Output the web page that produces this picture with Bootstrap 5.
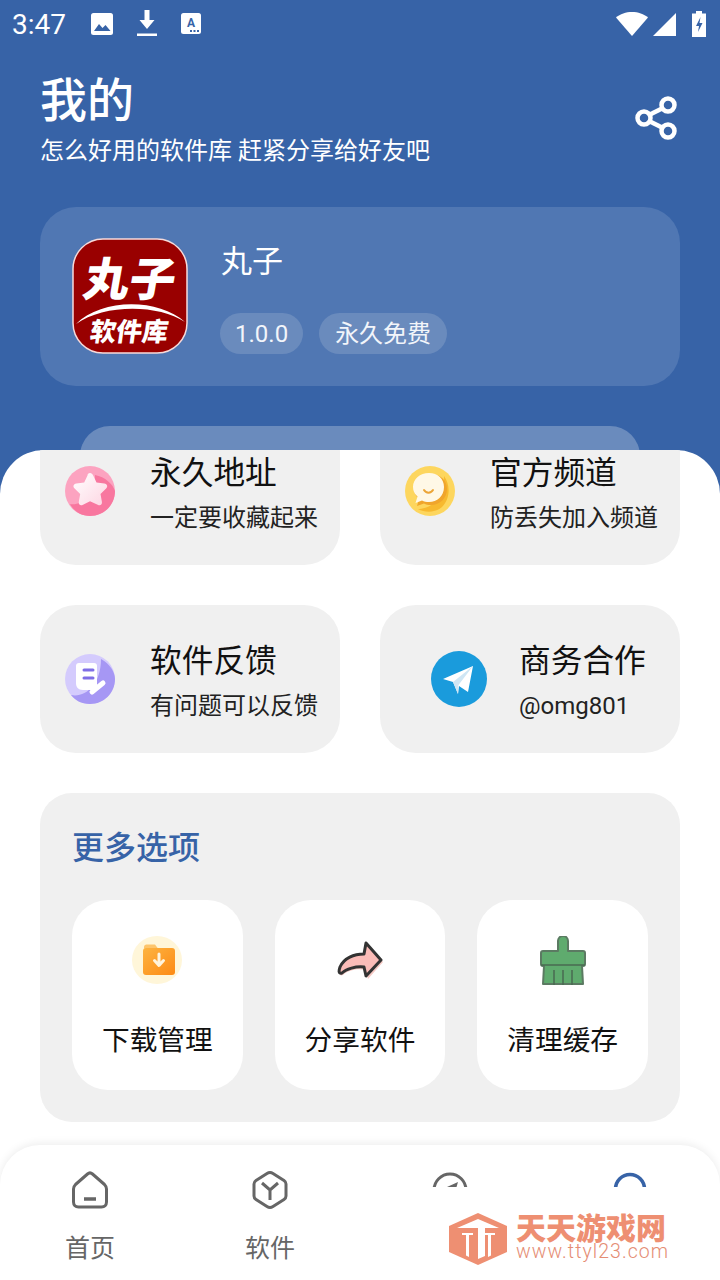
<!DOCTYPE html>
<html lang="zh">
<head>
    <meta charset="UTF-8">
    <meta name="viewport" content="width=device-width, initial-scale=1.0">
    <link href="https://cdn.jsdelivr.net/npm/bootstrap@5.3.3/dist/css/bootstrap.min.css" rel="stylesheet">
    <title>我的</title>
    <style>
        html, body{
            height: 1280px;
            overflow: hidden;
        }
        body{
            background: #3763a7;
            font-family: Roboto, "Noto Sans CJK SC", sans-serif;
            color: #111;
        }
        .app{
            position: relative;
            width: 720px;
            height: 1280px;
            overflow: hidden;
        }
        .top-area{
            height: 450px;
            overflow: hidden;
            color: #fff;
        }
        .status-bar{
            height: 48px;
            padding: 0 14px 0 12px;
        }
        .status-time{
            font-size: 28px;
            width: 54px;
            line-height: 48px;
            margin-top: 2px;
            white-space: nowrap;
        }
        .head-row{
            padding: 25px 43px 0 40px;
            height: 159px;
        }
        .head-title{
            font-size: 47px;
            line-height: 56px;
            font-weight: 500;
        }
        .head-sub{
            font-size: 24px;
            line-height: 36px;
            margin-top: 4px;
        }
        .head-share{
            margin-top: 23px;
        }
        .profile-box{
            margin: 0 40px;
            height: 179px;
            background: #5077b3;
            border-radius: 36px;
            padding: 31px 32px;
        }
        .profile-name{
            font-size: 31px;
            line-height: 44px;
            margin: 2px 0 0 1px;
        }
        .pill-row{
            margin-top: 29px;
        }
        .pill-tag{
            background: #6a8bbd;
            border-radius: 21px;
            height: 41px;
            line-height: 42px;
            font-size: 24px;
            padding: 0 16px;
            color: #f2f5fa;
        }
        .pill-tag.pill-short{
            padding: 0 15px;
        }
        .peek-box{
            margin: 40px 80px 0;
            height: 60px;
            background: #6a8bbd;
            border-radius: 30px 30px 0 0;
        }
        .sheet{
            height: 830px;
            background: #fff;
            border-radius: 44px 44px 0 0;
            overflow: hidden;
        }
        .sheet-inner{
            margin-top: -33px;
            padding: 0 40px;
        }
        .link-grid{
            display: grid;
            grid-template-columns: 300px 300px;
            gap: 40px;
        }
        .link-box{
            height: 148px;
            background: #f0f0f0;
            border-radius: 36px;
            padding-left: 25px;
        }
        .link-box.tg-box{
            padding-left: 51px;
        }
        .link-text{
            margin-left: 35px;
            padding-top: 4px;
        }
        .tg-box .link-text{
            margin-left: 32px;
        }
        .link-title{
            font-size: 31.7px;
            line-height: 44px;
        }
        .link-sub{
            font-size: 24px;
            line-height: 34px;
            margin-top: 5px;
            color: #222;
        }
        .more-panel{
            margin-top: 40px;
            height: 329px;
            background: #f0f0f0;
            border-radius: 32px;
            padding: 33px 32px 32px;
        }
        .more-title{
            font-size: 32px;
            line-height: 44px;
            font-weight: 500;
            color: #3763a7;
            margin-bottom: 30px;
        }
        .tile-grid{
            display: grid;
            grid-template-columns: repeat(3, 1fr);
            gap: 32px;
        }
        .tile-box{
            height: 190px;
            background: #fff;
            border-radius: 36px;
        }
        .tile-icon{
            height: 48px;
            margin-top: 36px;
        }
        .tile-label{
            font-size: 27.7px;
            line-height: 40px;
            margin-top: 37px;
        }
        .tab-bar{
            margin: 23px -40px 0;
            height: 135px;
            background: #fff;
            border-radius: 40px 40px 0 0;
            box-shadow: 0 -2px 8px rgba(0,0,0,.07);
        }
        .tab-item{
            width: 180px;
            padding-top: 26px;
            color: #666;
        }
        .tab-label{
            font-size: 25px;
            line-height: 36px;
            margin-top: 22px;
        }
        .water-mark{
            position: absolute;
            left: 427px;
            top: 1187px;
            width: 293px;
            height: 84px;
            background: #fff;
            padding: 26px 0 0 22px;
            color: #ee8f72;
        }
        .water-text{
            margin-left: 9px;
        }
        .water-name{
            font-size: 30px;
            line-height: 26px;
            font-weight: 900;
            margin-top: 3px;
        }
        .water-url{
            font-size: 19.5px;
            line-height: 20px;
            letter-spacing: 1.05px;
            font-weight: 300;
            color: #e58d74;
        }
    </style>
</head>
<body>
<div class="app">
    <div class="top-area">
        <div class="status-bar d-flex align-items-center">
            <div class="status-time">3:47</div>
            <svg class="ms-4 me-4" width="24" height="24" viewBox="0 0 24 24"><rect x="1" y="1" width="22" height="22" rx="2.5" fill="#fff"/><path d="M4 19l5-7 3.500 4 3-3 5 6z" fill="#3763a7"/></svg>
            <svg width="20" height="28" viewBox="0 0 20 28" style="margin-left:-1px"><path d="M7.500 0h5v10h5l-7.500 9-7.500-9h5z" fill="#fff"/><rect y="23.500" width="20" height="2.500" fill="#fff"/></svg>
            <svg width="20" height="22" viewBox="0 0 20 22" style="margin-left:24px"><rect width="20" height="21" rx="2.500" fill="#fff"/><text x="10" y="13.500" text-anchor="middle" font-size="12" font-weight="700" font-family="Roboto" fill="#3763a7">A</text><path d="M9 17h2v2H9zM12.500 17h2v2h-2zM16 17h2v2h-2z" fill="#3763a7"/></svg>
            <svg class="ms-auto" width="32" height="24" viewBox="0 0 32 24"><path d="M0 5.500C4 2 10 0 16 0s12 2 16 5.500L16 24z" fill="#fff"/></svg>
            <svg style="margin-left:5px" width="23" height="23" viewBox="0 0 23 23"><path d="M23 0v23H0z" fill="#fff"/></svg>
            <svg style="margin-left:16px" width="14" height="26" viewBox="0 0 14 26"><path d="M4 0h6v2.500h4V26H0V2.500h4z" fill="#fff"/><path d="M8.500 6L4 15h3l-1 6 4.500-9h-3z" fill="#3763a7"/></svg>
        </div>
        <div class="head-row d-flex justify-content-between">
            <div>
                <div class="head-title">我的</div>
                <div class="head-sub">怎么好用的软件库 赶紧分享给好友吧</div>
            </div>
            <svg class="head-share" width="42" height="44" viewBox="0 0 42 44" fill="none" stroke="#fff" stroke-width="4.500"><circle cx="9" cy="22" r="6.500"/><circle cx="33" cy="9" r="6.500"/><circle cx="33" cy="35" r="6.500"/><path d="M15 18.500L27 12.500M15 25.500L27 31.500"/></svg>
        </div>
        <div class="profile-box d-flex">
            <svg width="116" height="116" viewBox="0 0 116 116">
                <rect x="1" y="1" width="114" height="114" rx="30" fill="#990000" stroke="#f7dada" stroke-width="1.500"/>
                <text transform="translate(9 58) skewX(-10)" font-size="46" font-weight="900" font-family="'Noto Sans CJK SC'" fill="#fff">丸子</text>
                <path d="M4 86C30 60 86 60 113 84C86 66 32 66 4 86z" fill="#fff"/>
                <text transform="translate(17 103) skewX(-8)" font-size="26" font-weight="900" font-family="'Noto Sans CJK SC'" fill="#fff">软件库</text>
            </svg>
            <div class="ms-3 ps-3">
                <div class="profile-name">丸子</div>
                <div class="pill-row d-flex gap-3">
                    <div class="pill-tag pill-short">1.0.0</div>
                    <div class="pill-tag">永久免费</div>
                </div>
            </div>
        </div>
        <div class="peek-box"></div>
    </div>

    <div class="sheet">
        <div class="sheet-inner">
            <div class="link-grid">
                <div class="link-box d-flex align-items-center">
                    <svg width="50" height="50" viewBox="0 0 50 50"><defs><linearGradient id="starFill" x1="0" y1="0" x2="1" y2="1"><stop offset="0" stop-color="#fff"/><stop offset="1" stop-color="#fdd5e2"/></linearGradient></defs><circle cx="25" cy="25" r="25" fill="#fca3c0"/><path d="M30 9C40 11 48 18 50 25 50 39 39 50 25 50 15 50 8 44 5 38c12 2 26-10 25-29z" fill="#f8779f"/><path d="M25 7c1.500 0 2.500 1 3.200 2.500l3.300 7 7.800 1c3 .5 3.800 3 1.800 5l-5.600 5.500 1.400 7.800c.5 3-1.700 4.300-4.200 3L25 35.200l-7 3.600c-2.500 1.300-4.700 0-4.200-3l1.400-7.800-5.600-5.500c-2-2-1.200-4.500 1.800-5l7.800-1 3.300-7C22.500 8 23.500 7 25 7z" fill="url(#starFill)"/></svg>
                    <div class="link-text">
                        <div class="link-title">永久地址</div>
                        <div class="link-sub">一定要收藏起来</div>
                    </div>
                </div>
                <div class="link-box d-flex align-items-center">
                    <svg width="50" height="50" viewBox="0 0 50 50"><circle cx="25" cy="25" r="25" fill="#fdd65e"/><path d="M39 10c6 8 7 22-2 31-7 6-17 6-24 2 8 0 26-5 26-33z" fill="#f7b92f"/><path d="M26 8c10 0 16 7 16 15 0 9-7 16-16 16-3 0-5-.5-7-1.500L12 40l2-7c-3-3-5-6-5-10 0-8 7-15 17-15z" fill="#f0a52c"/><path d="M24 7c9 0 15 6 15 14 0 9-7 15-15 15-2.500 0-5-.5-7-1.500L10.500 37l2-6.500C9.500 28 8 25 8 21 8 13 15 7 24 7z" fill="#fff8e6"/><path d="M19 24c2 3.500 7 3.500 9 0" fill="none" stroke="#eca538" stroke-width="2" stroke-linecap="round"/></svg>
                    <div class="link-text">
                        <div class="link-title">官方频道</div>
                        <div class="link-sub">防丢失加入频道</div>
                    </div>
                </div>
                <div class="link-box d-flex align-items-center">
                    <svg width="50" height="50" viewBox="0 0 50 50"><circle cx="25" cy="25" r="25" fill="#d4cbfd"/><path d="M36 5c9 5 14 13 14 20 0 14-11 25-25 25-9 0-15-4-19-9 14 3 30-10 30-36z" fill="#a697f4"/><path d="M14 9h15c2 0 3 1 3 3v19c0 3-2 5-5 5H18c-5 0-7-3-7-7V12c0-2 1-3 3-3z" fill="#fff"/><path d="M19 16h9M19 24h9" stroke="#7f6ee6" stroke-width="3" stroke-linecap="round"/><path d="M27 38l11-9" stroke="#fff" stroke-width="5" stroke-linecap="round"/></svg>
                    <div class="link-text">
                        <div class="link-title">软件反馈</div>
                        <div class="link-sub">有问题可以反馈</div>
                    </div>
                </div>
                <div class="link-box tg-box d-flex align-items-center">
                    <svg width="56" height="56" viewBox="0 0 56 56"><circle cx="28" cy="28" r="28" fill="#1a9bdc"/><path d="M12 28L42 15 37 41 28 35 27 43 22 31z" fill="#fff"/><path d="M22 31L42 15 27.500 34 27 43z" fill="#cfe6f4"/></svg>
                    <div class="link-text">
                        <div class="link-title">商务合作</div>
                        <div class="link-sub">@omg801</div>
                    </div>
                </div>
            </div>

            <div class="more-panel">
                <div class="more-title">更多选项</div>
                <div class="tile-grid">
                    <div class="tile-box text-center">
                        <div class="tile-icon"><svg width="50" height="48" viewBox="0 0 50 48"><defs><linearGradient id="folderFill" x1="0" y1="0" x2="1" y2="1"><stop offset="0" stop-color="#fdb441"/><stop offset="1" stop-color="#fd8a14"/></linearGradient></defs><ellipse cx="25" cy="24" rx="25" ry="24" fill="#fff6d9"/><path d="M12 11c0-1.500 1-2.500 2.500-2.500H23l3 4h-14z" fill="#fdc56c"/><rect x="11" y="12" width="32" height="27" rx="3" fill="url(#folderFill)"/><path d="M27 18v10M22.500 24.500L27 29.500l4.500-5" fill="none" stroke="#fff4dc" stroke-width="3" stroke-linecap="round" stroke-linejoin="round"/></svg></div>
                        <div class="tile-label">下载管理</div>
                    </div>
                    <div class="tile-box text-center">
                        <div class="tile-icon"><svg width="46" height="48" viewBox="0 0 46 48"><path d="M31 9L46 25 31 42 28 33C20 31 10 34 6 38 2 40 2 35 4 31 8 22 19 19 28 19z" fill="#f6c9c4" transform="translate(0 1)"/><path d="M29 7L44 24 29 40 27 31C19 30 9 33 5 37 1 38 2 34 3 31 7 22 17 18 27 18z" fill="#fbbcb8" stroke="#333" stroke-width="3" stroke-linejoin="round"/></svg></div>
                        <div class="tile-label">分享软件</div>
                    </div>
                    <div class="tile-box text-center">
                        <div class="tile-icon"><svg width="46" height="50" viewBox="0 0 46 50"><path d="M18 15V5a5 5 0 0 1 10 0v10h15c1 0 2 1 2 2v11c0 1-1 2-2 2h-1l1 18H3l1-18H3c-1 0-2-1-2-2V17c0-1 1-2 2-2z" fill="#5fab6e" stroke="#5b7a62" stroke-width="2" stroke-linejoin="round"/><path d="M1 29h44M14 34v15M23 34v15M32 34v15" stroke="#4a6b52" stroke-width="1.500" fill="none"/></svg></div>
                        <div class="tile-label">清理缓存</div>
                    </div>
                </div>
            </div>

            <div class="tab-bar d-flex">
                <div class="tab-item text-center">
                    <svg width="38" height="38" viewBox="0 0 38 38" fill="none" stroke="#666" stroke-width="3"><path d="M16.500 3L4.500 13.500C3 15 2.500 16 2.500 18v13c0 3 2 5 5 5h23c3 0 5-2 5-5V18c0-2-.5-3-2-4.500L21.500 3c-1.500-1.300-3.500-1.300-5 0z" stroke-linejoin="round"/><path d="M13 28h12" stroke-width="3.500"/></svg>
                    <div class="tab-label">首页</div>
                </div>
                <div class="tab-item text-center">
                    <svg width="36" height="38" viewBox="0 0 36 38" fill="none" stroke="#666" stroke-width="3"><path d="M15 2.500L4 9.500C2.500 10.500 2 11.500 2 13v12c0 1.500.5 2.500 2 3.500l11 7c2 1.300 4 1.300 6 0l11-7c1.500-1 2-2 2-3.500V13c0-1.500-.5-2.500-2-3.500l-11-7c-2-1.300-4-1.300-6 0z"/><path d="M10 12l8 7 8-7M18 19v10"/></svg>
                    <div class="tab-label">软件</div>
                </div>
                <div class="tab-item text-center">
                    <svg width="36" height="38" viewBox="0 0 36 38" fill="none" stroke="#666" stroke-width="3"><circle cx="18" cy="19" r="16"/><path d="M26 11l-11 5-3 10 11-5z" fill="#666" stroke="none"/></svg>
                </div>
                <div class="tab-item text-center">
                    <svg width="36" height="38" viewBox="0 0 36 38" fill="none" stroke="#3763a7" stroke-width="3.500"><circle cx="18" cy="18" r="14.500"/></svg>
                </div>
            </div>
        </div>
    </div>

    <div class="water-mark d-flex">
        <svg width="58" height="52" viewBox="0 0 58 52">
            <path d="M29 0L58 13V39L29 52 0 39V13z" fill="#ee8f72"/>
            <path d="M29 6L50 15H36V43L29 46V15H8z" fill="#fff"/>
            <path d="M13 20h11v2h-4v22l-3-1.500V22h-4zM35 20h11v2h-4v20.500l-3 1.500V22h-4z" fill="#fff"/>
        </svg>
        <div class="water-text">
            <div class="water-name">天天游戏网</div>
            <div class="water-url">www.ttyl23.com</div>
        </div>
    </div>
</div>
<script src="https://cdn.jsdelivr.net/npm/bootstrap@5.3.3/dist/js/bootstrap.bundle.min.js"></script>
</body>
</html>
